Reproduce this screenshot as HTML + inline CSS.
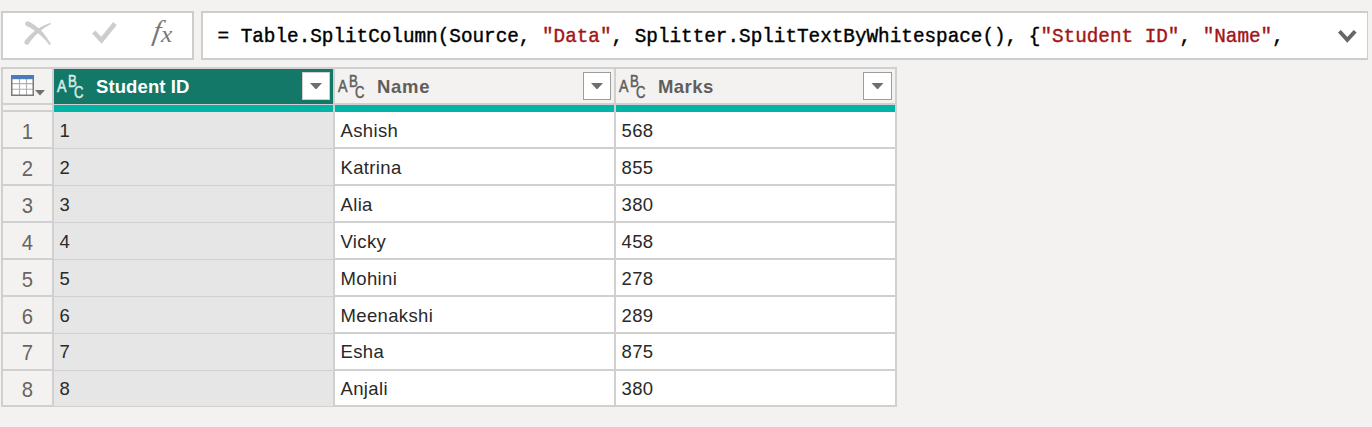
<!DOCTYPE html>
<html><head><meta charset="utf-8">
<style>
html,body{margin:0;padding:0;}
body{width:1372px;height:427px;background:#f3f2f1;position:relative;overflow:hidden;font-family:"Liberation Sans",sans-serif;}
.abs{position:absolute;}
.box{position:absolute;background:#fff;box-sizing:border-box;border:2px solid #cdcdcd;}
.mono{font-family:"Liberation Mono",monospace;font-size:19.32px;white-space:pre;color:#000;-webkit-text-stroke:0.4px currentColor;}
.str{color:#a31515;}
.hl{position:absolute;height:2px;background:#d0d0d0;}
.vl{position:absolute;width:2px;background:#d0d0d0;}
.cell{position:absolute;font-size:18.5px;color:#2a2928;white-space:pre;line-height:20px;letter-spacing:0.35px;}
.idx{position:absolute;font-size:22.5px;color:#676563;text-align:center;width:49px;left:3px;line-height:22px;transform:scaleX(0.9);}
.hdr{position:absolute;font-weight:bold;font-size:18.5px;white-space:pre;line-height:20px;letter-spacing:0.35px;}
.abc{position:absolute;top:0;width:30px;height:104px;font-size:16.5px;-webkit-text-stroke:0.55px currentColor;}
.abc span{position:absolute;line-height:18px;transform:scaleX(0.86);transform-origin:0 0;}
.abc .a{left:1px;top:77px;}
.abc .b{left:11.6px;top:72px;transform:scaleX(0.8);}
.abc .c{left:18.3px;top:83px;transform:scaleX(0.79);}
.dd{position:absolute;top:72px;width:28px;height:28px;box-sizing:border-box;background:#fff;border:1.8px solid #9c9c9c;}
.dd.sel{border-color:#d4cccc;}
.fx{font-family:"Liberation Serif",serif;font-style:italic;font-size:26px;color:#777;line-height:30px;}
</style></head>
<body>
<!-- formula bar -->
<div class="box" style="left:1px;top:11px;width:193px;height:49px;"></div>
<div class="box" style="left:201px;top:11px;width:1167px;height:49px;border-right-width:1px;"></div>
<div class="abs mono" style="left:217.5px;top:26px;line-height:22px;">= Table.SplitColumn(Source, <span class="str">"Data"</span>, Splitter.SplitTextByWhitespace(), {<span class="str">"Student ID"</span>, <span class="str">"Name"</span>,</div>

<!-- table -->
<div class="abs" style="left:1px;top:67px;width:896px;height:340px;background:#d0d0d0;"></div>
<!-- index column bg -->
<div class="abs" style="left:3px;top:69px;width:49px;height:336px;background:#f3f2f1;"></div>
<!-- headers -->
<div class="abs" style="left:54px;top:69px;width:279px;height:35px;background:#137867;"></div>
<div class="abs" style="left:335px;top:69px;width:279px;height:34px;background:#f3f2f1;"></div>
<div class="abs" style="left:616px;top:69px;width:279px;height:34px;background:#f3f2f1;"></div>
<!-- teal bars -->
<div class="abs" style="left:54px;top:105px;width:279px;height:7px;background:#01b4a5;"></div>
<div class="abs" style="left:335px;top:105px;width:279px;height:7px;background:#01b4a5;"></div>
<div class="abs" style="left:616px;top:105px;width:279px;height:7px;background:#01b4a5;"></div>
<!-- index header separators -->
<div class="hl" style="left:3px;top:103px;width:49px;"></div>
<div class="hl" style="left:3px;top:110px;width:49px;"></div>

<!--ROWS-->
<div class="abs" style="left:54px;top:112px;width:279px;height:36px;background:#e6e6e6;"></div>
<div class="hl" style="left:3px;top:147px;width:49px;"></div>
<div class="abs" style="left:335px;top:112px;width:279px;height:35px;background:#fff;"></div>
<div class="abs" style="left:616px;top:112px;width:279px;height:35px;background:#fff;"></div>
<div class="idx" style="top:121px;">1</div>
<div class="cell" style="left:59.5px;top:121px;">1</div>
<div class="cell" style="left:340.5px;top:121px;">Ashish</div>
<div class="cell" style="left:621.5px;top:121px;">568</div>
<div class="abs" style="left:54px;top:149px;width:279px;height:36px;background:#e6e6e6;"></div>
<div class="hl" style="left:3px;top:184px;width:49px;"></div>
<div class="abs" style="left:335px;top:149px;width:279px;height:35px;background:#fff;"></div>
<div class="abs" style="left:616px;top:149px;width:279px;height:35px;background:#fff;"></div>
<div class="idx" style="top:158px;">2</div>
<div class="cell" style="left:59.5px;top:158px;">2</div>
<div class="cell" style="left:340.5px;top:158px;">Katrina</div>
<div class="cell" style="left:621.5px;top:158px;">855</div>
<div class="abs" style="left:54px;top:186px;width:279px;height:36px;background:#e6e6e6;"></div>
<div class="hl" style="left:3px;top:221px;width:49px;"></div>
<div class="abs" style="left:335px;top:186px;width:279px;height:35px;background:#fff;"></div>
<div class="abs" style="left:616px;top:186px;width:279px;height:35px;background:#fff;"></div>
<div class="idx" style="top:195px;">3</div>
<div class="cell" style="left:59.5px;top:195px;">3</div>
<div class="cell" style="left:340.5px;top:195px;">Alia</div>
<div class="cell" style="left:621.5px;top:195px;">380</div>
<div class="abs" style="left:54px;top:223px;width:279px;height:36px;background:#e6e6e6;"></div>
<div class="hl" style="left:3px;top:258px;width:49px;"></div>
<div class="abs" style="left:335px;top:223px;width:279px;height:35px;background:#fff;"></div>
<div class="abs" style="left:616px;top:223px;width:279px;height:35px;background:#fff;"></div>
<div class="idx" style="top:232px;">4</div>
<div class="cell" style="left:59.5px;top:232px;">4</div>
<div class="cell" style="left:340.5px;top:232px;">Vicky</div>
<div class="cell" style="left:621.5px;top:232px;">458</div>
<div class="abs" style="left:54px;top:260px;width:279px;height:36px;background:#e6e6e6;"></div>
<div class="hl" style="left:3px;top:295px;width:49px;"></div>
<div class="abs" style="left:335px;top:260px;width:279px;height:35px;background:#fff;"></div>
<div class="abs" style="left:616px;top:260px;width:279px;height:35px;background:#fff;"></div>
<div class="idx" style="top:269px;">5</div>
<div class="cell" style="left:59.5px;top:269px;">5</div>
<div class="cell" style="left:340.5px;top:269px;">Mohini</div>
<div class="cell" style="left:621.5px;top:269px;">278</div>
<div class="abs" style="left:54px;top:297px;width:279px;height:36px;background:#e6e6e6;"></div>
<div class="hl" style="left:3px;top:332px;width:49px;"></div>
<div class="abs" style="left:335px;top:297px;width:279px;height:35px;background:#fff;"></div>
<div class="abs" style="left:616px;top:297px;width:279px;height:35px;background:#fff;"></div>
<div class="idx" style="top:306px;">6</div>
<div class="cell" style="left:59.5px;top:306px;">6</div>
<div class="cell" style="left:340.5px;top:306px;">Meenakshi</div>
<div class="cell" style="left:621.5px;top:306px;">289</div>
<div class="abs" style="left:54px;top:334px;width:279px;height:36px;background:#e6e6e6;"></div>
<div class="hl" style="left:3px;top:369px;width:49px;"></div>
<div class="abs" style="left:335px;top:334px;width:279px;height:35px;background:#fff;"></div>
<div class="abs" style="left:616px;top:334px;width:279px;height:35px;background:#fff;"></div>
<div class="idx" style="top:342px;">7</div>
<div class="cell" style="left:59.5px;top:342px;">7</div>
<div class="cell" style="left:340.5px;top:342px;">Esha</div>
<div class="cell" style="left:621.5px;top:342px;">875</div>
<div class="abs" style="left:54px;top:371px;width:279px;height:35px;background:#e6e6e6;"></div>
<div class="abs" style="left:335px;top:371px;width:279px;height:34px;background:#fff;"></div>
<div class="abs" style="left:616px;top:371px;width:279px;height:34px;background:#fff;"></div>
<div class="idx" style="top:379px;">8</div>
<div class="cell" style="left:59.5px;top:379px;">8</div>
<div class="cell" style="left:340.5px;top:379px;">Anjali</div>
<div class="cell" style="left:621.5px;top:379px;">380</div>
<!--/ROWS-->
<!-- header contents -->
<div class="hdr" style="left:96px;top:77px;color:#fff;letter-spacing:0.1px;">Student ID</div>
<div class="hdr" style="left:377px;top:77px;color:#605e5c;letter-spacing:0.7px;">Name</div>
<div class="hdr" style="left:658px;top:77px;color:#605e5c;letter-spacing:0.45px;">Marks</div>
<!-- ABC icons -->
<div class="abc" style="left:56px;color:#dbe9e5;"><span class="a">A</span><span class="b">B</span><span class="c">C</span></div>
<div class="abc" style="left:337px;color:#605e5c;"><span class="a">A</span><span class="b">B</span><span class="c">C</span></div>
<div class="abc" style="left:618px;color:#605e5c;"><span class="a">A</span><span class="b">B</span><span class="c">C</span></div>
<!-- dropdowns -->
<div class="dd sel" style="left:302px;"></div>
<div class="dd" style="left:583px;"></div>
<div class="dd" style="left:863px;width:29px;"></div>
<svg class="abs" style="left:0;top:0" width="900" height="110">
  <path d="M310 83 H322 L316.5 89 H315.5 Z" fill="#6e6e6e"/>
  <path d="M591 83 H603 L597.5 89 H596.5 Z" fill="#6e6e6e"/>
  <path d="M871.5 83 H883.5 L878 89 H877 Z" fill="#6e6e6e"/>
  <!-- table icon -->
  <rect x="11" y="79" width="23" height="17" fill="#fff"/>
  <path d="M19.5 79 V95 M26.5 79 V95 M12 83.6 H33 M12 89.3 H33" stroke="#b0b0b0" stroke-width="1.1"/>
  <path d="M11.75 79 V95.2 H33.25 V79" fill="none" stroke="#7a7a7a" stroke-width="1.5"/>
  <rect x="11" y="75" width="23" height="4.2" fill="#4a7aba"/>
  <path d="M35 90 H45 L40 95.5 Z" fill="#707070"/>
</svg>
<!-- formula bar icons -->
<svg class="abs" style="left:0;top:0" width="200" height="60">
  <path d="M26.60 26.09 L27.53 26.48 L28.46 26.90 L29.40 27.36 L30.33 27.86 L31.27 28.39 L32.20 28.96 L33.13 29.57 L34.07 30.21 L35.00 30.89 L35.94 31.60 L36.87 32.36 L37.81 33.15 L38.79 33.93 L39.77 34.75 L40.75 35.61 L41.73 36.51 L42.71 37.45 L43.69 38.42 L44.67 39.44 L45.65 40.50 L46.63 41.59 L47.61 42.73 L48.58 43.90 L49.56 45.11 L51.04 44.09 L50.21 42.74 L49.38 41.42 L48.54 40.13 L47.69 38.88 L46.83 37.66 L45.97 36.48 L45.10 35.32 L44.23 34.20 L43.34 33.12 L42.45 32.06 L41.55 31.04 L40.64 30.05 L39.68 29.15 L38.71 28.27 L37.74 27.44 L36.75 26.64 L35.76 25.87 L34.76 25.14 L33.76 24.44 L32.74 23.79 L31.72 23.16 L30.69 22.57 L29.65 22.02 L28.60 21.51 L27.97 21.33 L27.32 21.32 L26.69 21.47 L26.12 21.79 L25.65 22.24 L25.31 22.80 L25.13 23.43 L25.12 24.08 L25.27 24.71 L25.59 25.28 L26.04 25.75 Z M28.93 43.66 L29.62 42.62 L30.33 41.60 L31.05 40.61 L31.80 39.64 L32.57 38.68 L33.36 37.75 L34.16 36.84 L34.99 35.95 L35.84 35.08 L36.71 34.23 L37.60 33.40 L38.51 32.59 L39.42 31.78 L40.36 30.98 L41.32 30.21 L42.30 29.45 L43.30 28.72 L44.32 28.00 L45.37 27.31 L46.45 26.63 L47.54 25.98 L48.66 25.35 L49.80 24.74 L50.96 24.15 L50.44 22.85 L49.17 23.29 L47.92 23.74 L46.68 24.23 L45.47 24.74 L44.26 25.27 L43.08 25.84 L41.90 26.42 L40.75 27.04 L39.61 27.68 L38.49 28.35 L37.38 29.04 L36.29 29.76 L35.24 30.53 L34.20 31.33 L33.18 32.16 L32.19 33.01 L31.20 33.88 L30.24 34.79 L29.30 35.71 L28.38 36.67 L27.47 37.65 L26.58 38.65 L25.72 39.69 L24.87 40.74 L24.56 41.32 L24.41 41.96 L24.43 42.61 L24.62 43.23 L24.97 43.79 L25.44 44.23 L26.02 44.54 L26.66 44.69 L27.31 44.67 L27.93 44.48 L28.49 44.13 Z" fill="#cdcdcd"/>
  <path d="M93.8 32 L101.5 40.3 L115 23.5" fill="none" stroke="#cdcdcd" stroke-width="4.6"/>
</svg>
<div class="abs fx" style="left:151px;top:16.5px;font-size:28.5px;line-height:28.5px;transform:skewX(-9deg);transform-origin:0 100%;">f</div>
<div class="abs fx" style="left:160.5px;top:23px;font-size:23px;line-height:23px;transform:scaleX(1.1);transform-origin:0 0;">x</div>
<svg class="abs" style="left:1330px;top:20px" width="40" height="30">
  <path d="M9.4 11.3 L17.3 19.9 L25.2 11.3" fill="none" stroke="#666" stroke-width="3.9"/>
</svg>
</body></html>
